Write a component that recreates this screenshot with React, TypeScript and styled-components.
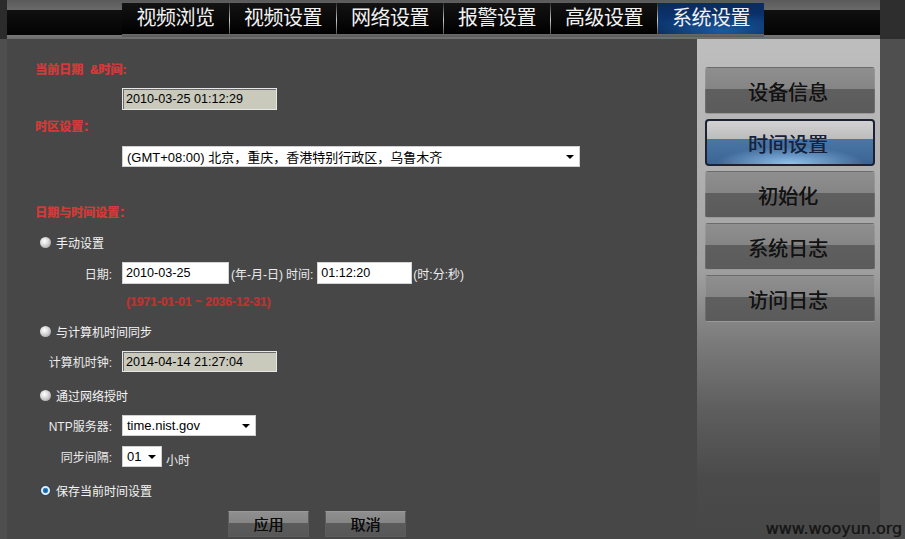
import React from "react";
import styled, { createGlobalStyle, css } from "styled-components";

const Global = createGlobalStyle`
  html, body { margin: 0; padding: 0; background: #474747; }
  body { font-family: "Liberation Sans", "Noto Sans CJK SC", sans-serif; }
  * { box-sizing: border-box; }
`;

const Page = styled.div`
  width: 905px;
  height: 539px;
  overflow: hidden;
  position: relative;
  display: flex;
  flex-direction: column;
  background: #474747;
`;

const Header = styled.header`
  display: flex;
  height: 39px;
  flex: none;
`;

const Edge = styled.div<{ $w: number; $bg: string }>`
  width: ${(p) => p.$w}px;
  flex: none;
  background: ${(p) => p.$bg};
`;

const HeaderBar = styled.div`
  flex: 1;
  display: flex;
  align-items: flex-start;
  padding-left: 115px;
  background: linear-gradient(
    to bottom,
    #5a5a5a 0,
    #6a6a6a 10px,
    #101010 10px,
    #030303 35px,
    #777 35px,
    #6c6c6c 39px
  );
`;

const Tabs = styled.nav`
  display: flex;
  margin-top: 3px;
  height: 34px;
  padding-bottom: 3px;
  background: linear-gradient(to bottom, #131313 0, #000 31px, #6a6a6a 31px, #5a5a5a 34px);
`;

const Tab = styled.div<{ $active?: boolean }>`
  width: 107px;
  height: 31px;
  display: flex;
  align-items: center;
  justify-content: center;
  padding-bottom: 4px;
  font-family: "Noto Sans CJK SC", sans-serif;
  font-size: 20px;
  line-height: 1;
  color: #f2f2f2;
  letter-spacing: -0.5px;
  & + & {
    border-left: 1px solid;
    border-image: linear-gradient(to bottom, #222, #c8c8c8 55%, #444) 1;
  }
  ${(p) =>
    p.$active &&
    css`
      background: radial-gradient(ellipse 70% 60% at 60% 90%, #1b5aa0 0, rgba(27, 90, 160, 0) 100%),
        linear-gradient(to bottom, #0a2b5e, #0b3570 60%, #082956);
    `}
`;

const Body = styled.div`
  flex: 1;
  display: flex;
`;

const Content = styled.main`
  width: 690px;
  flex: none;
  display: flex;
  flex-direction: column;
  padding-top: 23px;
  background: #474747;
  color: #eee;
`;

const SectionTitle = styled.div<{ $mt: number }>`
  margin-top: ${(p) => p.$mt}px;
  padding-left: 28px;
  height: 16px;
  line-height: 16px;
  font-size: 12px;
  font-weight: bold;
  color: #d03a3a;
  text-shadow: 0.5px 0 0 #d03a3a;
  white-space: pre;
`;

const FieldRow = styled.div<{ $mt: number }>`
  margin-top: ${(p) => p.$mt}px;
  display: grid;
  grid-template-columns: 105px 1fr;
  column-gap: 10px;
  align-items: center;
`;

const FieldLabel = styled.span`
  justify-self: end;
  font-size: 12px;
  color: #ececec;
  white-space: nowrap;
`;

const Inline = styled.div`
  display: flex;
  align-items: center;
`;

const Note = styled.span<{ $ml?: number; $dy?: number }>`
  margin-left: ${(p) => p.$ml ?? 0}px;
  font-size: 12px;
  color: #ececec;
  white-space: nowrap;
  position: relative;
  top: ${(p) => p.$dy ?? 0}px;
`;

const RangeNote = styled.div<{ $mt: number }>`
  margin-top: ${(p) => p.$mt}px;
  padding-left: 119px;
  height: 16px;
  line-height: 16px;
  font-size: 12px;
  font-weight: bold;
  color: #b83434;
  text-shadow: 0.4px 0 0 #b83434;
`;

const TextInput = styled.input<{ $w: number; $h?: number; $ro?: boolean; $ml?: number }>`
  width: ${(p) => p.$w}px;
  height: ${(p) => p.$h ?? 22}px;
  margin: 0 0 0 ${(p) => p.$ml ?? 0}px;
  padding: 0 3px;
  font: 12.6px "Liberation Sans", Arial, sans-serif;
  color: #000;
  outline: none;
  background: ${(p) => (p.$ro ? "#c9c9bc" : "#fff")};
  border: 1px solid ${(p) => (p.$ro ? "#e8e8e8" : "#d4d4d4")};
  box-shadow: ${(p) => (p.$ro ? "inset 1px 1px 0 #6a6a6a" : "none")};
`;

const SelectBox = styled.div<{ $w: number }>`
  width: ${(p) => p.$w}px;
  height: 21px;
  display: flex;
  align-items: center;
  padding-left: 4px;
  background: #fff;
  border: 1px solid #d0d0d0;
  font: 13px "Liberation Sans", "Noto Sans CJK SC", sans-serif;
  color: #000;
  white-space: nowrap;
`;

const Caret = styled.span`
  margin-left: auto;
  margin-right: 5px;
  width: 0;
  height: 0;
  border-left: 4px solid transparent;
  border-right: 4px solid transparent;
  border-top: 4px solid #000;
`;

const RadioRow = styled.label<{ $mt: number }>`
  margin-top: ${(p) => p.$mt}px;
  padding-left: 33px;
  height: 16px;
  display: flex;
  align-items: center;
  gap: 5px;
  font-size: 12px;
  color: #f4f4f4;
`;

const Radio = styled.span<{ $checked?: boolean }>`
  width: 11px;
  height: 11px;
  flex: none;
  border-radius: 50%;
  ${(p) =>
    p.$checked
      ? css`
          background: radial-gradient(circle at 50% 50%, #0d4d8c 0, #2d86cc 2.3px, #f2f6fa 3.2px, #dfe4ea 4px, #34506e 5px, #22364c 5.5px);
        `
      : css`
          background: radial-gradient(circle at 40% 38%, #ffffff 0, #e0e0e0 35%, #a8a8a8 80%, #7e7e7e 100%);
        `}
`;

const ActionRow = styled.div<{ $mt: number }>`
  margin-top: ${(p) => p.$mt}px;
  padding-left: 221px;
  display: flex;
  gap: 16px;
`;

const ActionButton = styled.button`
  width: 81px;
  height: 26px;
  margin: 0;
  padding: 0 0 1px;
  border: 1px solid #5c5c5c;
  border-top-color: #999;
  font-family: "Noto Sans CJK SC", sans-serif;
  font-size: 15px;
  line-height: 1;
  color: #0c0c0c;
  text-shadow: 0.3px 0 0 #0c0c0c;
  background: linear-gradient(to bottom, #8f8f8f 0, #858585 47%, #5c5c5c 47%, #575757 100%);
`;

const Sidebar = styled.aside`
  width: 183px;
  flex: none;
  display: flex;
  flex-direction: column;
  gap: 5px;
  padding: 28px 0 0 8px;
  background: linear-gradient(
    to bottom,
    #bebebe 0,
    #b2b2b2 120px,
    #a0a0a0 230px,
    #7c7c7c 300px,
    #5e5e5e 370px,
    #4a4a4a 440px,
    #474747 100%
  );
`;

const SideButton = styled.div<{ $active?: boolean }>`
  width: 170px;
  height: 47px;
  border-radius: 3px;
  display: flex;
  align-items: center;
  justify-content: center;
  padding-top: 2px;
  padding-right: 4px;
  font-family: "Noto Sans CJK SC", sans-serif;
  font-size: 20px;
  line-height: 1;
  color: #121212;
  text-shadow: 0.3px 0 0 #121212;
  border: 1px solid rgba(255, 255, 255, 0.1);
  background: linear-gradient(to bottom, #8f8f8f 0, #858585 46%, #5f5f5f 46%, #5b5b5b 100%);
  ${(p) =>
    p.$active &&
    css`
      border: 2px solid #1c2231;
      border-radius: 4px;
      color: #17223a;
      text-shadow: 0.3px 0 0 #17223a;
      background: radial-gradient(ellipse 45% 40% at 50% 100%, rgba(150, 200, 245, 0.95) 0, rgba(150, 200, 245, 0) 100%),
        linear-gradient(to bottom, #d2d2d2 0, #bcbcbc 42%, #4a77a6 42%, #3b6494 100%);
    `}
`;

const Watermark = styled.div`
  position: absolute;
  right: 3px;
  bottom: 0px;
  font-family: "DejaVu Sans", Verdana, sans-serif;
  font-size: 16px;
  line-height: 20px;
  color: rgba(22, 22, 22, 0.88);
  text-shadow: 0.5px 0 0 rgba(22, 22, 22, 0.88);
`;

const tabs = ["视频浏览", "视频设置", "网络设置", "报警设置", "高级设置", "系统设置"];
const side = ["设备信息", "时间设置", "初始化", "系统日志", "访问日志"];

export default function App() {
  return (
    <>
      <Global />
      <Page>
        <Header>
          <Edge $w={7} $bg="#2b2b2b" />
          <HeaderBar>
            <Tabs>
              {tabs.map((t, i) => (
                <Tab key={t} $active={i === 5}>
                  {t}
                </Tab>
              ))}
            </Tabs>
          </HeaderBar>
          <Edge $w={25} $bg="#2e2e2e" />
        </Header>
        <Body>
          <Edge $w={7} $bg="#4e4e4e" />
          <Content>
            <SectionTitle $mt={0}>{"当前日期  &时间:"}</SectionTitle>
            <FieldRow $mt={10}>
              <span />
              <Inline>
                <TextInput $w={155} $ro readOnly value="2010-03-25 01:12:29" />
              </Inline>
            </FieldRow>
            <SectionTitle $mt={9}>时区设置：</SectionTitle>
            <FieldRow $mt={11}>
              <span />
              <SelectBox $w={458}>
                (GMT+08:00) 北京，重庆，香港特别行政区，乌鲁木齐
                <Caret />
              </SelectBox>
            </FieldRow>
            <SectionTitle $mt={38}>日期与时间设置：</SectionTitle>
            <RadioRow $mt={13}>
              <Radio />
              手动设置
            </RadioRow>
            <FieldRow $mt={12}>
              <FieldLabel>日期:</FieldLabel>
              <Inline>
                <TextInput $w={107} readOnly value="2010-03-25" />
                <Note $ml={2}>(年-月-日)</Note>
                <Note $ml={3}>时间:</Note>
                <TextInput $w={95} $ml={4} readOnly value="01:12:20" />
                <Note $ml={1}>(时:分:秒)</Note>
              </Inline>
            </FieldRow>
            <RangeNote $mt={10}>(1971-01-01 ~ 2036-12-31)</RangeNote>
            <RadioRow $mt={13}>
              <Radio />
              与计算机时间同步
            </RadioRow>
            <FieldRow $mt={12}>
              <FieldLabel>计算机时钟:</FieldLabel>
              <Inline>
                <TextInput $w={155} $h={21} $ro readOnly value="2014-04-14 21:27:04" />
              </Inline>
            </FieldRow>
            <RadioRow $mt={15}>
              <Radio />
              通过网络授时
            </RadioRow>
            <FieldRow $mt={12}>
              <FieldLabel>NTP服务器:</FieldLabel>
              <SelectBox $w={134}>
                time.nist.gov
                <Caret />
              </SelectBox>
            </FieldRow>
            <FieldRow $mt={10}>
              <FieldLabel>同步间隔:</FieldLabel>
              <Inline>
                <SelectBox $w={40}>
                  01
                  <Caret />
                </SelectBox>
                <Note $ml={4} $dy={3}>
                  小时
                </Note>
              </Inline>
            </FieldRow>
            <RadioRow $mt={15}>
              <Radio $checked />
              保存当前时间设置
            </RadioRow>
            <ActionRow $mt={13}>
              <ActionButton>应用</ActionButton>
              <ActionButton>取消</ActionButton>
            </ActionRow>
          </Content>
          <Sidebar>
            {side.map((s, i) => (
              <SideButton key={s} $active={i === 1}>
                {s}
              </SideButton>
            ))}
          </Sidebar>
          <Edge $w={25} $bg="#4f4f4f" />
        </Body>
        <Watermark>www.wooyun.org</Watermark>
      </Page>
    </>
  );
}
